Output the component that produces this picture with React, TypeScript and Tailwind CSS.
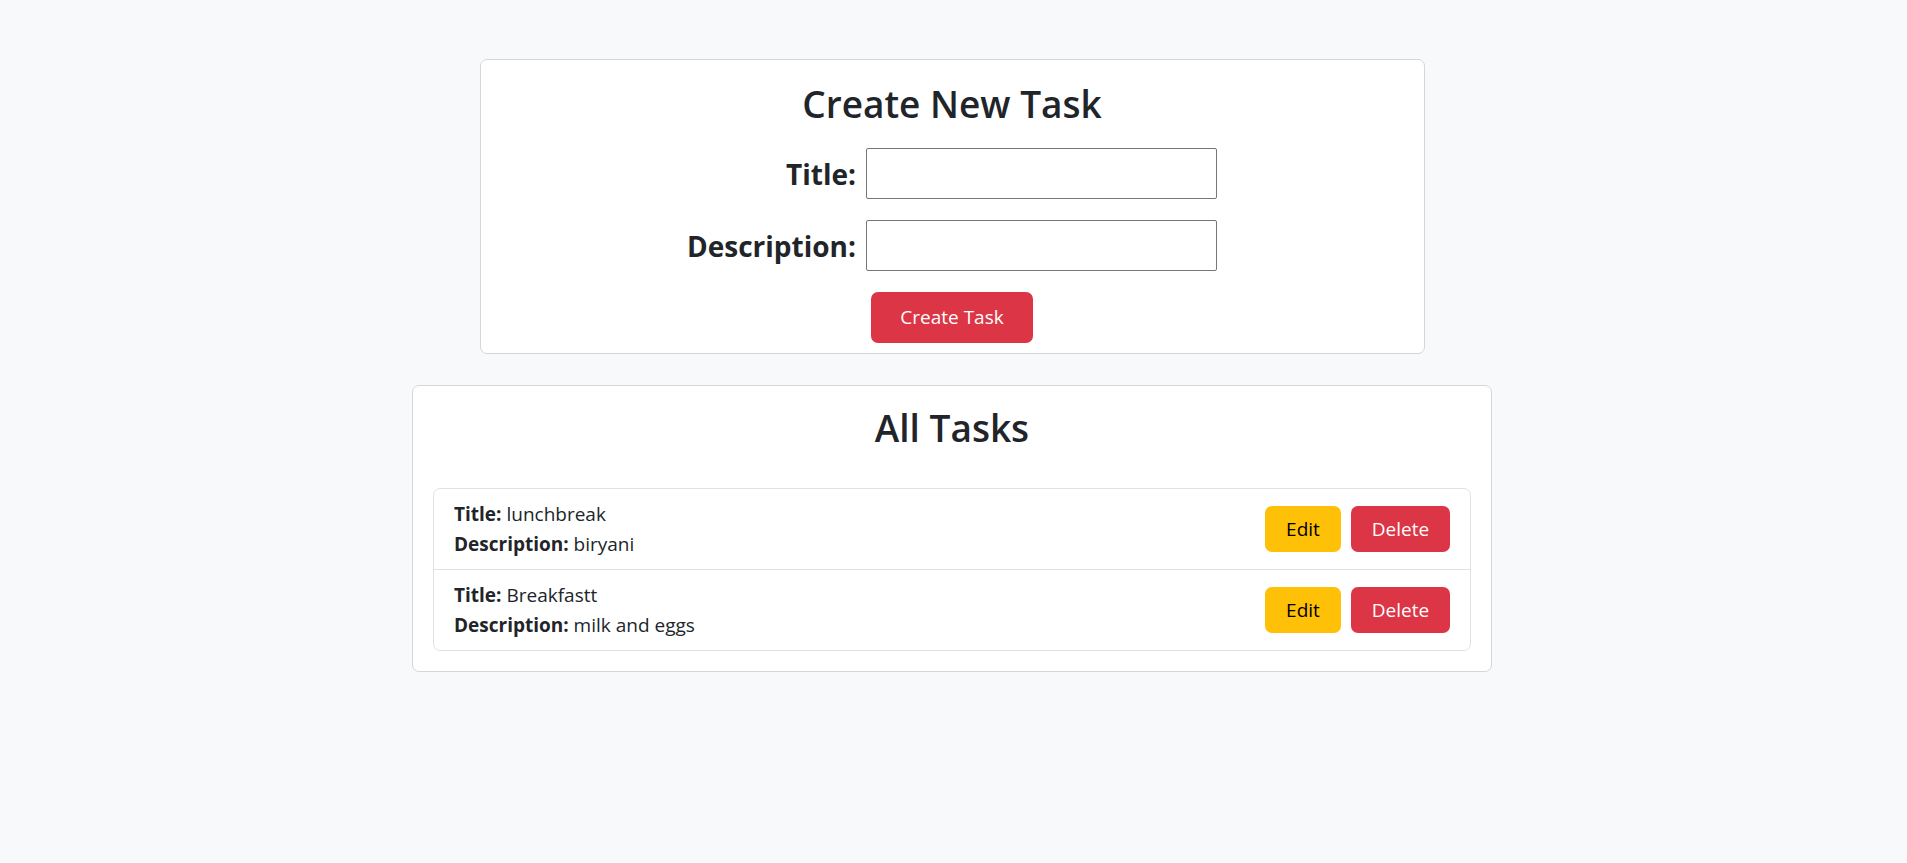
import { useState } from 'react';

interface Task {
  id: number;
  title: string;
  description: string;
}

const initialTasks: Task[] = [
  { id: 1, title: 'lunchbreak', description: 'biryani' },
  { id: 2, title: 'Breakfastt', description: 'milk and eggs' },
];

export default function App() {
  const [tasks, setTasks] = useState<Task[]>(initialTasks);
  const [title, setTitle] = useState('');
  const [description, setDescription] = useState('');

  const handleCreate = (e: React.FormEvent) => {
    e.preventDefault();
    if (!title.trim()) return;
    setTasks([...tasks, { id: Date.now(), title, description }]);
    setTitle('');
    setDescription('');
  };

  const handleDelete = (id: number) => {
    setTasks(tasks.filter(t => t.id !== id));
  };

  return (
    <div className="min-h-[863px] bg-[#f8f9fa] pt-[59px] pr-[3px] text-[#212529] font-['Segoe_UI','Open_Sans',sans-serif]">
      {/* Create form card */}
      <div className="mx-auto w-[945px] rounded-[7px] border border-[#d6d6d6] bg-white px-5 pt-5 pb-[10px]">
        <h2 className="mb-5 text-center text-[37px] leading-[48px] font-semibold">Create New Task</h2>
        <form onSubmit={handleCreate} className="flex flex-col items-center">
          <div className="grid grid-cols-[auto_351px] items-center gap-x-[10px] gap-y-[21px]">
            <label className="text-right text-[28px] leading-[36px] font-bold">Title:</label>
            <input
              value={title}
              onChange={e => setTitle(e.target.value)}
              className="h-[51px] rounded-[2px] border border-[#767676] px-1 text-xl outline-none"
            />
            <label className="text-right text-[28px] leading-[36px] font-bold">Description:</label>
            <input
              value={description}
              onChange={e => setDescription(e.target.value)}
              className="h-[51px] rounded-[2px] border border-[#767676] px-1 text-xl outline-none"
            />
          </div>
          <button
            type="submit"
            className="mt-[21px] h-[51px] w-[162px] rounded-[7px] bg-[#dc3545] text-[19px] text-white"
          >
            Create Task
          </button>
        </form>
      </div>

      {/* Task list card */}
      <div className="mx-auto mt-[31px] w-[1080px] rounded-[7px] border border-[#d6d6d6] bg-white p-5">
        <h2 className="mb-[34px] pb-[4px] text-center text-[37px] leading-[44px] font-semibold">All Tasks</h2>
        <ul className="rounded-[7px] border border-[#dee2e6]">
          {tasks.map((task, i) => (
            <li
              key={task.id}
              className={`flex items-center justify-between px-5 py-[10px] ${i > 0 ? 'border-t border-[#dee2e6]' : ''}`}
            >
              <div className="text-[19px] leading-[30px]">
                <p><strong className="font-bold">Title:</strong> {task.title}</p>
                <p><strong className="font-bold">Description:</strong> {task.description}</p>
              </div>
              <div className="flex gap-[10px]">
                <button className="h-[46px] w-[76px] rounded-[7px] bg-[#ffc107] text-[19px] text-black">Edit</button>
                <button
                  onClick={() => handleDelete(task.id)}
                  className="h-[46px] w-[99px] rounded-[7px] bg-[#dc3545] text-[19px] text-white"
                >
                  Delete
                </button>
              </div>
            </li>
          ))}
        </ul>
      </div>
    </div>
  );
}
